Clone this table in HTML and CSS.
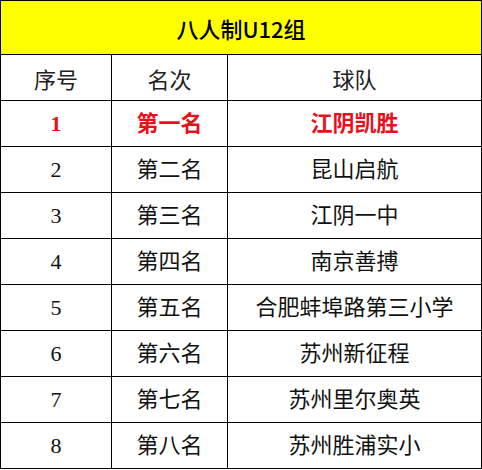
FILE: index.html
```html
<!DOCTYPE html>
<html lang="zh">
<head>
<meta charset="utf-8">
<link rel="stylesheet" href="styles.css">
</head>
<body>
<table class="rank">
  <colgroup>
    <col class="c1"><col class="c2"><col class="c3">
  </colgroup>
  <thead>
    <tr class="title"><th colspan="3">八人制U12组</th></tr>
    <tr class="head"><th>序号</th><th>名次</th><th>球队</th></tr>
  </thead>
  <tbody>
    <tr class="first"><td class="num">1</td><td>第一名</td><td>江阴凯胜</td></tr>
    <tr><td class="num">2</td><td>第二名</td><td>昆山启航</td></tr>
    <tr><td class="num">3</td><td>第三名</td><td>江阴一中</td></tr>
    <tr><td class="num">4</td><td>第四名</td><td>南京善搏</td></tr>
    <tr><td class="num">5</td><td>第五名</td><td>合肥蚌埠路第三小学</td></tr>
    <tr><td class="num">6</td><td>第六名</td><td>苏州新征程</td></tr>
    <tr><td class="num">7</td><td>第七名</td><td>苏州里尔奥英</td></tr>
    <tr><td class="num">8</td><td>第八名</td><td>苏州胜浦实小</td></tr>
  </tbody>
</table>
</body>
</html>
```

FILE: styles.css
```css
html, body {
  margin: 0;
  padding: 0;
  background: #ffffff;
}
.rank {
  border-collapse: collapse;
  table-layout: fixed;
  width: 481px;
  font-family: "Liberation Serif", "Noto Sans CJK SC", serif;
  font-size: 22px;
  color: #111111;
}
.c1 { width: 111px; }
.c2 { width: 116px; }
.c3 { width: 254px; }
.rank th, .rank td {
  border: 1px solid #000000;
  padding: 0;
  text-align: center;
  vertical-align: middle;
  height: 45px;
  line-height: 24px;
}
.title th {
  background: #ffff00;
  height: 53px;
  font-family: "Noto Sans CJK SC", sans-serif;
  font-weight: 500;
  font-size: 22px;
  color: #000000;
}
.head th {
  font-family: "Noto Sans CJK SC", sans-serif;
  font-weight: 400;
  font-size: 22px;
  color: #222222;
}
.first td {
  color: #e8101a;
  font-weight: 700;
}
.num {
  font-size: 22px;
}
```
